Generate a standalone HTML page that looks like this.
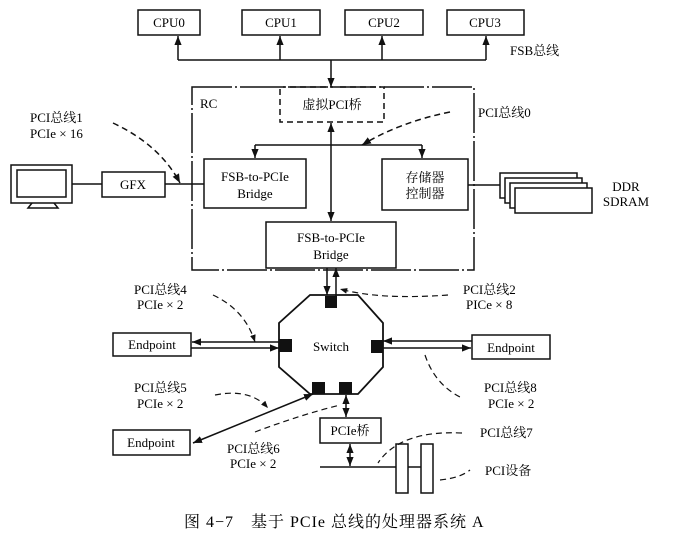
<!DOCTYPE html>
<html><head><meta charset="utf-8"><style>
html,body{margin:0;padding:0;background:#fff;}
svg{display:block;}
text{font-family:"Liberation Serif","Noto Serif CJK SC",serif;font-size:13px;fill:#000;}
</style></head><body>
<svg width="691" height="537" viewBox="0 0 691 537" xmlns="http://www.w3.org/2000/svg">
<defs>
<marker id="a" viewBox="0 0 10 10" refX="10" refY="5" markerWidth="6" markerHeight="6" orient="auto-start-reverse"><path d="M0,1 L10,5 L0,9 z" fill="#111"/></marker>
</defs>
<g stroke="#111" stroke-width="1.5" fill="none">
<rect x="138" y="10" width="62" height="25"/>
<rect x="242" y="10" width="78" height="25"/>
<rect x="345" y="10" width="78" height="25"/>
<rect x="447" y="10" width="77" height="25"/>
<line x1="178" y1="60" x2="486" y2="60"/>
<line x1="178" y1="60" x2="178" y2="36" marker-end="url(#a)"/>
<line x1="280" y1="60" x2="280" y2="36" marker-end="url(#a)"/>
<line x1="382" y1="60" x2="382" y2="36" marker-end="url(#a)"/>
<line x1="486" y1="60" x2="486" y2="36" marker-end="url(#a)"/>
<line x1="331" y1="60" x2="331" y2="87" marker-end="url(#a)"/>
<rect x="192" y="87" width="282" height="183" stroke-dasharray="40,3,2,3"/>
<rect x="280" y="87" width="104" height="35" stroke-dasharray="6,4"/>
<line x1="331" y1="123" x2="331" y2="221" marker-start="url(#a)" marker-end="url(#a)"/>
<line x1="255" y1="145" x2="422" y2="145"/>
<line x1="255" y1="145" x2="255" y2="158" marker-end="url(#a)"/>
<line x1="422" y1="145" x2="422" y2="158" marker-end="url(#a)"/>
<rect x="204" y="159" width="102" height="49"/>
<rect x="382" y="159" width="86" height="51"/>
<rect x="266" y="222" width="130" height="46"/>
<rect x="102" y="172" width="63" height="25"/>
<line x1="72" y1="184" x2="102" y2="184"/>
<line x1="165" y1="184" x2="204" y2="184"/>
<rect x="11" y="165" width="61" height="38"/>
<rect x="17" y="170" width="49" height="27"/>
<path d="M32,203 L28,208 L58,208 L54,203"/>
<line x1="468" y1="185" x2="500" y2="185"/>
<rect x="500" y="173" width="77" height="25" fill="#fff"/>
<rect x="505" y="178" width="77" height="25" fill="#fff"/>
<rect x="510" y="183" width="77" height="25" fill="#fff"/>
<rect x="515" y="188" width="77" height="25" fill="#fff"/>
<path d="M113,123 Q160,145 180,183" stroke-dasharray="6,4" marker-end="url(#a)"/>
<path d="M450,112 Q400,122 362,145" stroke-dasharray="6,4" marker-end="url(#a)"/>
<line x1="327" y1="268" x2="327" y2="295" marker-end="url(#a)"/>
<line x1="336" y1="296" x2="336" y2="268" marker-end="url(#a)"/>
<polygon points="310,295 358,295 383,323 383,367 358,394 310,394 279,367 279,323" stroke-width="1.8"/>
<rect x="113" y="333" width="78" height="23"/>
<rect x="472" y="335" width="78" height="24"/>
<rect x="113" y="430" width="77" height="25"/>
<line x1="279" y1="342" x2="192" y2="342" marker-end="url(#a)"/>
<line x1="191" y1="348" x2="279" y2="348" marker-end="url(#a)"/>
<line x1="472" y1="341" x2="383" y2="341" marker-end="url(#a)"/>
<line x1="383" y1="348" x2="471" y2="348" marker-end="url(#a)"/>
<line x1="313" y1="394" x2="193" y2="443" marker-start="url(#a)" marker-end="url(#a)"/>
<rect x="320" y="418" width="61" height="25"/>
<line x1="346" y1="395" x2="346" y2="417" marker-start="url(#a)" marker-end="url(#a)"/>
<line x1="350" y1="444" x2="350" y2="466" marker-start="url(#a)" marker-end="url(#a)"/>
<line x1="320" y1="467" x2="396" y2="467"/>
<line x1="408" y1="467" x2="421" y2="467"/>
<rect x="396" y="444" width="12" height="49"/>
<rect x="421" y="444" width="12" height="49"/>
<g stroke-dasharray="6,4" stroke-width="1.2">
<path d="M213,295 Q245,310 255,342" marker-end="url(#a)"/>
<path d="M448,295 Q380,300 340,289" marker-end="url(#a)"/>
<path d="M215,395 Q250,388 268,408" marker-end="url(#a)"/>
<path d="M255,432 Q300,415 340,405"/>
<path d="M425,355 Q435,385 462,398"/>
<path d="M462,433 Q400,430 378,463"/>
<path d="M440,480 Q460,478 470,470"/>
</g>
</g>
<g fill="#111">
<rect x="325" y="296" width="12" height="12"/>
<rect x="279" y="339" width="13" height="13"/>
<rect x="371" y="340" width="12" height="13"/>
<rect x="312" y="382" width="13" height="12"/>
<rect x="339" y="382" width="13" height="12"/>
</g>
<g text-anchor="middle">
<text x="169" y="27">CPU0</text>
<text x="281" y="27">CPU1</text>
<text x="384" y="27">CPU2</text>
<text x="485" y="27">CPU3</text>
<text x="332" y="109">虚拟PCI桥</text>
<text x="255" y="181">FSB-to-PCIe</text>
<text x="255" y="198">Bridge</text>
<text x="425" y="182">存储器</text>
<text x="425" y="198">控制器</text>
<text x="331" y="242">FSB-to-PCIe</text>
<text x="331" y="259">Bridge</text>
<text x="133" y="189">GFX</text>
<text x="626" y="191">DDR</text>
<text x="626" y="206">SDRAM</text>
<text x="331" y="351">Switch</text>
<text x="152" y="349">Endpoint</text>
<text x="511" y="352">Endpoint</text>
<text x="151" y="447">Endpoint</text>
<text x="350" y="435">PCIe桥</text>
</g>
<text x="510" y="55">FSB总线</text>
<text x="200" y="108">RC</text>
<text x="478" y="117">PCI总线0</text>
<text x="30" y="122">PCI总线1</text>
<text x="30" y="138">PCIe × 16</text>
<text x="134" y="294">PCI总线4</text>
<text x="137" y="309">PCIe × 2</text>
<text x="463" y="294">PCI总线2</text>
<text x="466" y="309">PICe × 8</text>
<text x="134" y="392">PCI总线5</text>
<text x="137" y="408">PCIe × 2</text>
<text x="484" y="392">PCI总线8</text>
<text x="488" y="408">PCIe × 2</text>
<text x="480" y="437">PCI总线7</text>
<text x="227" y="453">PCI总线6</text>
<text x="230" y="468">PCIe × 2</text>
<text x="485" y="475">PCI设备</text>
<text x="184" y="527" style="font-size:16px;letter-spacing:1px">图 4−7　基于 PCIe 总线的处理器系统 A</text>
</svg>
</body></html>
